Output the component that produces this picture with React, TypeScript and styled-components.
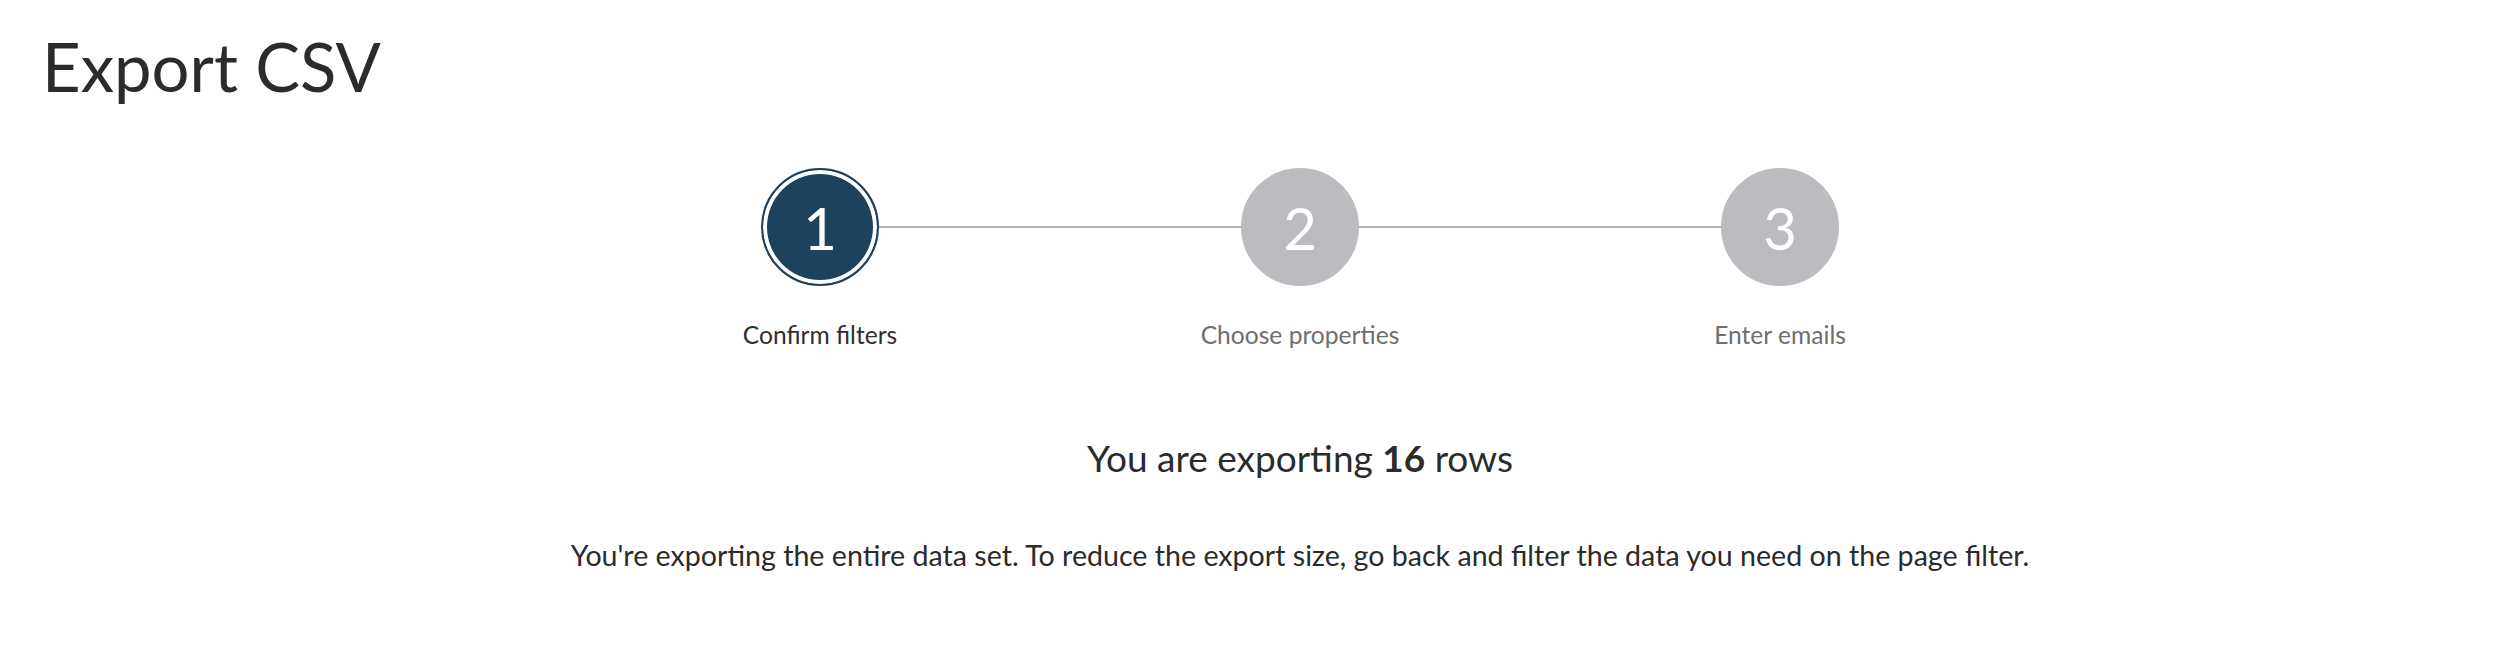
import React from 'react'
import styled, { createGlobalStyle } from 'styled-components'

const GlobalStyle = createGlobalStyle`
  html, body {
    margin: 0;
    padding: 0;
    background: #ffffff;
  }
  body {
    font-family: Lato, 'Noto Sans', sans-serif;
    color: #2b2b2b;
  }
`

const Page = styled.div`
  width: 100%;
  min-height: 648px;
  background: #ffffff;
`

const Title = styled.h1`
  margin: 0;
  padding: 33px 0 0 42px;
  font-size: 67px;
  line-height: 1;
  font-weight: 400;
  color: #2b2b2b;
`

const Content = styled.main`
  padding-left: 84px;
  display: flex;
  flex-direction: column;
  align-items: center;
`

const Stepper = styled.ol`
  list-style: none;
  margin: 68px 0 0;
  padding: 0;
  display: grid;
  grid-template-columns: repeat(3, 480px);
`

const Step = styled.li`
  display: flex;
  flex-direction: column;
  align-items: center;
`

const CircleRow = styled.div`
  width: 100%;
  display: flex;
  align-items: center;
`

const Connector = styled.div<{ $hidden?: boolean }>`
  flex: 1;
  height: 2px;
  background: ${p => (p.$hidden ? 'transparent' : '#b5b5b8')};
`

const Circle = styled.div<{ $active?: boolean }>`
  box-sizing: border-box;
  width: 118px;
  height: 118px;
  border-radius: 50%;
  display: flex;
  align-items: center;
  justify-content: center;
  font-size: 58px;
  font-weight: 400;
  color: #ffffff;
  background: ${p => (p.$active ? '#1d425e' : '#bcbcc0')};
  border: 2px solid ${p => (p.$active ? '#1d425e' : '#bcbcc0')};
  box-shadow: ${p => (p.$active ? 'inset 0 0 0 4px #ffffff' : 'none')};
`

const StepLabel = styled.span<{ $active?: boolean }>`
  margin-top: 37px;
  font-size: 24.6px;
  line-height: 1;
  color: ${p => (p.$active ? '#2f2f2f' : '#6e6e6e')};
`

const Summary = styled.h2`
  margin: 91px 0 0;
  font-size: 37px;
  line-height: 1;
  font-weight: 400;
  color: #2b2b2b;

  strong {
    font-weight: 700;
  }
`

const Note = styled.p`
  margin: 65px 0 0;
  font-size: 28.6px;
  line-height: 1;
  color: #2b2b2b;
`

const steps = ['Confirm filters', 'Choose properties', 'Enter emails']

const App: React.FC = () => {
  const current = 0
  return (
    <Page>
      <GlobalStyle />
      <Title>Export CSV</Title>
      <Content>
        <Stepper>
          {steps.map((label, i) => (
            <Step key={label}>
              <CircleRow>
                <Connector $hidden={i === 0} />
                <Circle $active={i === current}>{i + 1}</Circle>
                <Connector $hidden={i === steps.length - 1} />
              </CircleRow>
              <StepLabel $active={i === current}>{label}</StepLabel>
            </Step>
          ))}
        </Stepper>
        <Summary>
          You are exporting <strong>16</strong> rows
        </Summary>
        <Note>
          You're exporting the entire data set. To reduce the export size, go back and filter the data you need on the page filter.
        </Note>
      </Content>
    </Page>
  )
}

export default App
